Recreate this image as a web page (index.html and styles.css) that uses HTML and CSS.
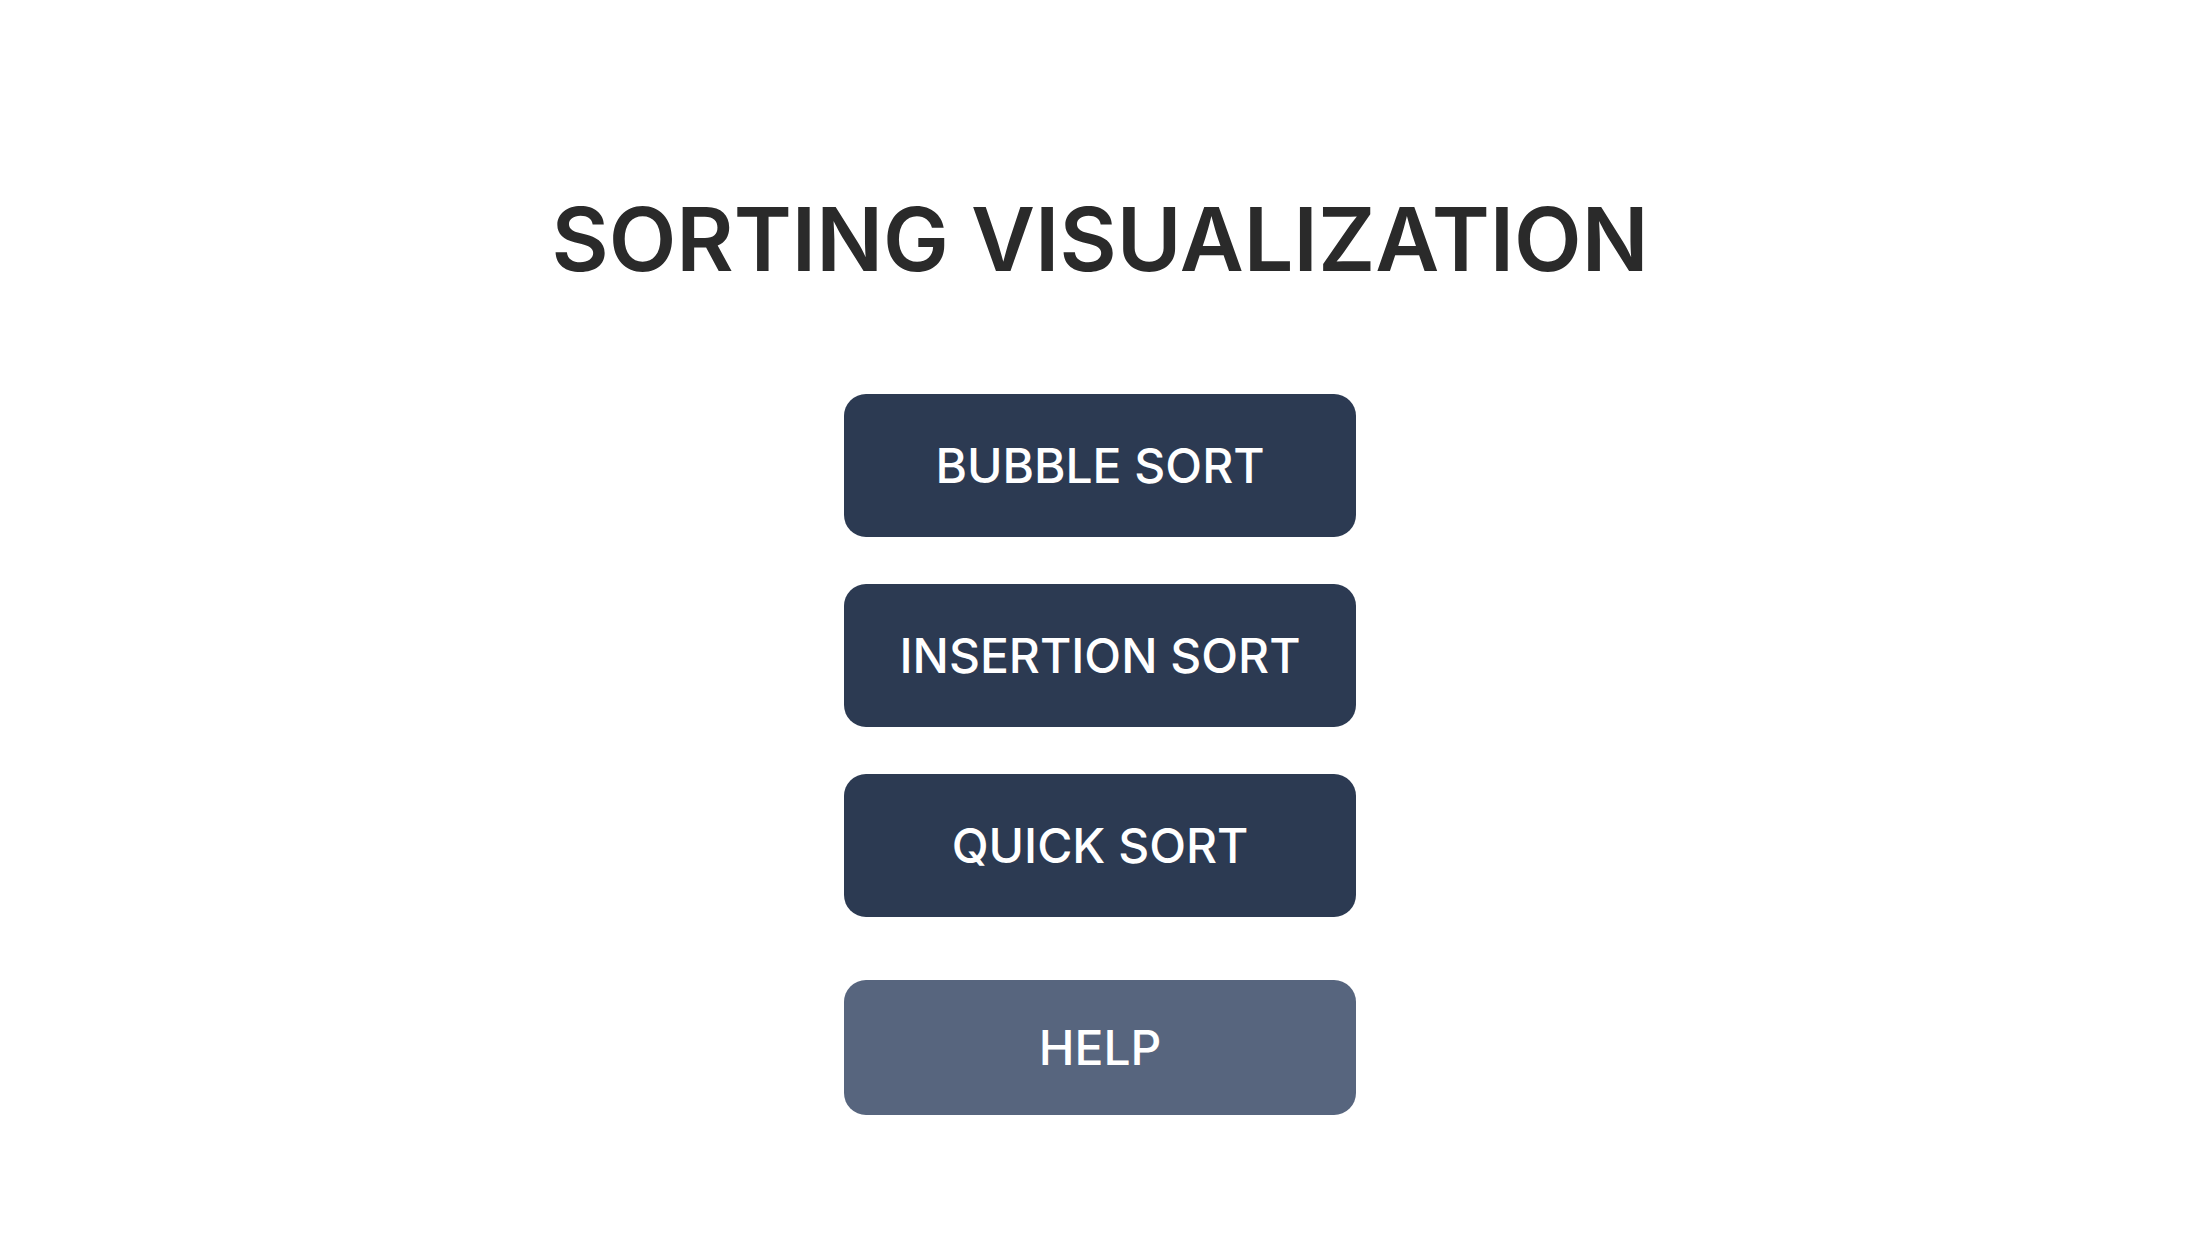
FILE: index.html
```html
<!DOCTYPE html>
<html lang="en">
<head>
<meta charset="utf-8">
<title>Sorting Visualization</title>
<link rel="stylesheet" href="styles.css">
</head>
<body>
<main class="menu">
  <h1 class="title">SORTING VISUALIZATION</h1>
  <nav class="options">
    <button class="btn">BUBBLE SORT</button>
    <button class="btn">INSERTION SORT</button>
    <button class="btn">QUICK SORT</button>
    <button class="btn btn-help">HELP</button>
  </nav>
</main>
</body>
</html>
```

FILE: styles.css
```css
html, body {
  margin: 0;
  padding: 0;
  background: #ffffff;
}

body {
  font-family: Inter, "Noto Sans", "Liberation Sans", sans-serif;
}

.menu {
  display: flex;
  flex-direction: column;
  align-items: center;
  padding-top: 187px;
}

.title {
  margin: 0;
  font-size: 88px;
  line-height: 1.2;
  font-weight: 600;
  color: #2a2a2a;
  letter-spacing: 0;
}

.options {
  display: flex;
  flex-direction: column;
  align-items: center;
  gap: 47px;
  margin-top: 101.4px;
}

.btn {
  display: flex;
  align-items: center;
  justify-content: center;
  width: 512px;
  height: 143px;
  border: none;
  border-radius: 22px;
  background: #2c3a52;
  color: #ffffff;
  font-family: inherit;
  font-size: 48px;
  font-weight: 500;
  padding: 0;
  cursor: pointer;
}

.btn-help {
  height: 135px;
  margin-top: 16px;
  background: #57657e;
}
```
